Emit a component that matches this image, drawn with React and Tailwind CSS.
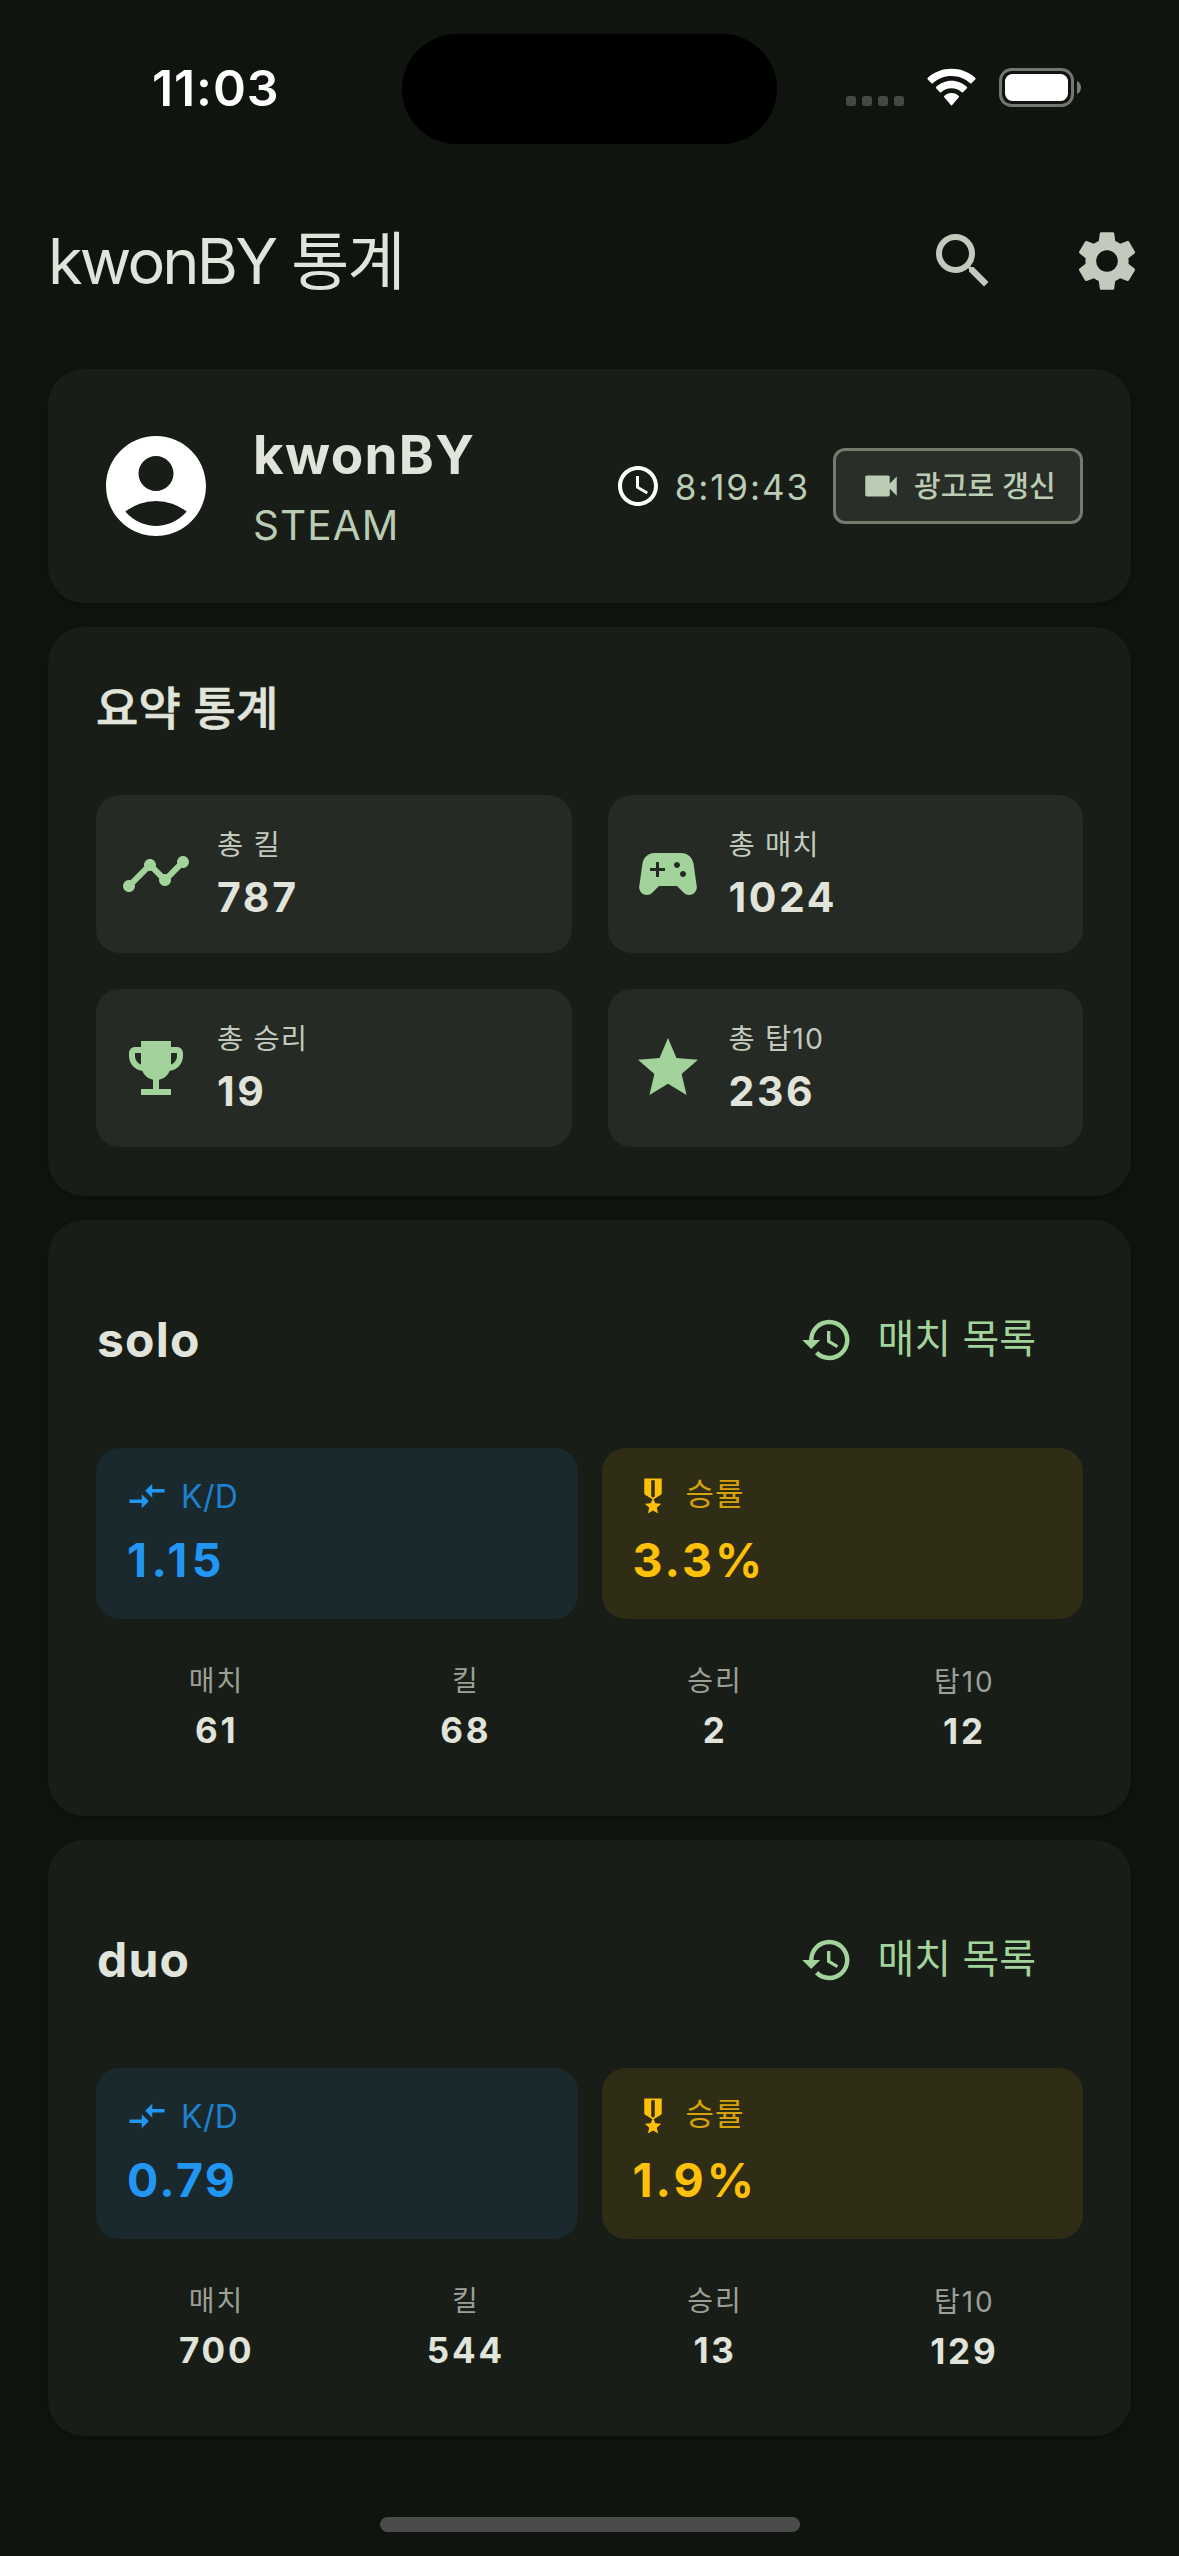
import {
  MdSearch,
  MdSettings,
  MdAccessTime,
  MdVideocam,
  MdTimeline,
  MdSportsEsports,
  MdEmojiEvents,
  MdStar,
  MdHistory,
  MdCompareArrows,
  MdMilitaryTech,
} from "react-icons/md";

const summary = [
  { label: "총 킬", value: "787", icon: MdTimeline },
  { label: "총 매치", value: "1024", icon: MdSportsEsports },
  { label: "총 승리", value: "19", icon: MdEmojiEvents },
  { label: "총 탑10", value: "236", icon: MdStar },
];

const modes = [
  {
    name: "solo",
    kd: "1.15",
    kdTracking: "tracking-[4.4px]",
    winRate: "3.3%",
    stats: [["매치", "61"], ["킬", "68"], ["승리", "2"], ["탑10", "12"]],
  },
  {
    name: "duo",
    kd: "0.79",
    kdTracking: "tracking-[2.3px]",
    winRate: "1.9%",
    stats: [["매치", "700"], ["킬", "544"], ["승리", "13"], ["탑10", "129"]],
  },
];

function AccountCircle({ className }) {
  return (
    <svg viewBox="0 0 24 24" fill="currentColor" className={className}>
      <path d="M12 2C6.48 2 2 6.48 2 12s4.48 10 10 10 10-4.48 10-10S17.52 2 12 2zm0 4c1.93 0 3.5 1.57 3.5 3.5S13.93 13 12 13s-3.5-1.57-3.5-3.5S10.07 6 12 6zm0 14c-2.03 0-4.43-.82-6.14-2.88a9.947 9.947 0 0 1 12.28 0C16.43 19.18 14.03 20 12 20z" />
    </svg>
  );
}

function StatusBar() {
  return (
    <div className="flex h-[177px] items-start">
      <div className="w-[402px] pt-[58px] pl-[152px] text-[50px] leading-[60px] font-semibold tracking-[0.9px] text-white">11:03</div>
      <div className="mt-[34px] h-[110px] w-[375px] rounded-full bg-black" />
      <div className="mt-[68px] ml-[69px] flex h-10">
        <div className="mt-7 flex gap-[6px]">
          {[0, 1, 2, 3].map((i) => (
            <div key={i} className="size-[10px] rounded-[3px] bg-[#454844]" />
          ))}
        </div>
        <svg viewBox="0 0 51 38" className="ml-[22px] h-[38px] w-[51px]" fill="#fff">
          <path d="M25.5 7.9c7.2 0 13.8 2.8 18.7 7.3.4.3 1 .3 1.3 0l3.9-3.9c.4-.4.4-1 0-1.4C43.1 4.1 34.7.8 25.5.8S7.9 4.1 1.6 9.9c-.4.4-.4 1 0 1.4l3.9 3.9c.4.4 1 .4 1.3 0 4.9-4.6 11.5-7.3 18.7-7.3z" />
          <path d="M25.5 20.3c3.9 0 7.5 1.5 10.2 3.9.4.4 1 .4 1.3 0l3.9-3.9c.4-.4.4-1.1 0-1.4-4.1-3.8-9.5-6.2-15.4-6.2s-11.3 2.4-15.4 6.2c-.4.4-.4 1 0 1.4l3.9 3.9c.4.4 1 .4 1.3 0 2.7-2.4 6.3-3.9 10.2-3.9z" />
          <path d="M32.8 27.9c.4.4.4.9 0 1.3l-6.6 7.9c-.4.5-1 .5-1.4 0l-6.600-7.900c-.4-.4-.4-.9 0-1.300 1.800-1.700 4.400-2.800 7.300-2.800s5.500 1.100 7.300 2.800z" />
        </svg>
        <svg viewBox="0 0 82 39" className="ml-[22px] h-[39px] w-[82px]">
          <rect x="1.5" y="1.5" width="72" height="36" rx="11" fill="none" stroke="#747673" strokeWidth="3" />
          <rect x="6" y="6" width="63" height="27" rx="7.5" fill="#fff" />
          <path d="M78 13v13c2.5-1.1 4-3.6 4-6.5s-1.5-5.4-4-6.5z" fill="#7b7d7a" />
        </svg>
      </div>
    </div>
  );
}

function AppBar() {
  return (
    <header className="flex h-[168px] items-center justify-between pr-9 pl-12 text-[#e0e4db]">
      <h1 className="text-[63px] leading-[84px] font-normal tracking-[-1.7px]">
        <span className="tracking-[-2.8px]">kwonBY</span> 통계
      </h1>
      <div className="flex gap-[72px] text-[#c2c9bd]">
        <MdSearch className="size-[72px]" />
        <MdSettings className="size-[72px]" />
      </div>
    </header>
  );
}

function Card({ className, children }) {
  return (
    <section className={`rounded-[36px] bg-[#181d17] px-12 shadow-[0_3px_6px_rgba(0,0,0,0.2)] ${className}`}>
      {children}
    </section>
  );
}

function ProfileCard() {
  return (
    <Card className="flex h-[234px] items-center">
      <AccountCircle className="size-[120px] text-white" />
      <div className="ml-[37px] pb-px">
        <div className="text-[53px] leading-[80px] font-bold tracking-[1.3px] text-[#e0e4db]">kwonBY</div>
        <div className="text-[40.5px] leading-[61px] tracking-[1.1px] text-[#baccb3]">STEAM</div>
      </div>
      <div className="ml-auto flex items-center text-[#baccb3]">
        <MdAccessTime className="size-12 text-white" />
        <span className="ml-[13px] pt-[2px] text-[35px] leading-[48px] tracking-[1.9px]">8:19:43</span>
        <button className="ml-[23px] flex h-[76px] w-[250px] items-center rounded-[12px] border-[3px] border-[#717c6d] bg-[#2a2e28] pl-6">
          <MdVideocam className="size-[42px]" />
          <span className="ml-3 pt-px text-[29px] leading-[40px] font-medium tracking-[0.1px] whitespace-nowrap">광고로 갱신</span>
        </button>
      </div>
    </Card>
  );
}

function SummaryCard() {
  return (
    <Card className="h-[569px] pt-12">
      <h2 className="mb-[54px] text-[46px] leading-[66px] font-medium tracking-[0.2px] text-[#e0e4db] [-webkit-text-stroke:0.6px_#e0e4db]">
        요약 통계
      </h2>
      <div className="grid grid-cols-2 gap-x-9 gap-y-[36px]">
        {summary.map(({ label, value, icon: Icon }) => (
          <div key={label} className="flex h-[158px] items-center gap-6 rounded-[24px] bg-[#252a24] pl-6">
            <Icon className="size-[72px] text-[#a1d39a]" />
            <div className="pl-px">
              <div className="pt-[2px] text-[28.5px] leading-[44px] font-normal tracking-[1.1px] text-[#c2c9bd]">{label}</div>
              <div className="text-[41px] leading-[60px] font-bold tracking-[2.6px] text-[#e0e4db]">{value}</div>
            </div>
          </div>
        ))}
      </div>
    </Card>
  );
}

function ModeCard({ name, kd, kdTracking, winRate, stats }) {
  return (
    <Card className="h-[596px] pt-12">
      <div className="mb-9 flex h-[144px] items-center justify-between pr-[47px]">
        <h2 className="pl-px text-[48px] leading-[60px] font-bold tracking-[1.2px] text-[#e0e4db]">{name}</h2>
        <div className="flex items-center gap-6 text-[#a1d39a]">
          <MdHistory className="size-[54px]" />
          <span className="pb-[2px] text-[40px] leading-[60px] font-normal">매치 목록</span>
        </div>
      </div>
      <div className="grid grid-cols-2 gap-6">
        <div className="h-[171px] rounded-[24px] bg-[#19292d] px-[30px] pt-6 text-[#2196f3]">
          <div className="flex h-12 items-center gap-3">
            <MdCompareArrows className="size-[42px]" />
            <span className="pt-[2px] pl-px text-[32px] leading-[48px] tracking-[0.4px] opacity-80">K/D</span>
          </div>
          <div className={`mt-[10px] pl-px text-[46.5px] leading-[60px] font-bold ${kdTracking}`}>{kd}</div>
        </div>
        <div className="h-[171px] rounded-[24px] bg-[#2f2d15] px-[30px] pt-6 text-[#ffc107]">
          <div className="flex h-12 items-center gap-3">
            <MdMilitaryTech className="size-[42px]" />
            <span className="pb-[5px] text-[31px] leading-[48px] font-normal tracking-[1px] opacity-80">승률</span>
          </div>
          <div className="mt-[10px] pl-px text-[46.5px] leading-[60px] font-bold tracking-[3px]">{winRate}</div>
        </div>
      </div>
      <div className="mt-9 grid grid-cols-4 gap-3 pl-[2px] text-center">
        {stats.map(([label, value]) => (
          <div key={label} className="last:pt-px">
            <div className="pt-[3px] text-[28px] leading-[47px] font-normal tracking-[2px] text-[#9ca098]">{label}</div>
            <div className="text-[35px] leading-[51px] font-bold tracking-[2.8px] text-[#e0e4db]">{value}</div>
          </div>
        ))}
      </div>
    </Card>
  );
}

export default function App() {
  return (
    <div className="flex h-[2556px] w-[1179px] flex-col overflow-hidden bg-[#0f140e] font-['Inter','Noto_Sans_CJK_KR',sans-serif]">
      <StatusBar />
      <AppBar />
      <main className="mt-6 flex flex-col gap-6 px-12">
        <ProfileCard />
        <SummaryCard />
        {modes.map((mode) => (
          <ModeCard key={mode.name} {...mode} />
        ))}
      </main>
      <div className="mx-auto mt-[81px] h-[15px] w-[420px] rounded-full bg-[#4c4b4b]" />
    </div>
  );
}
